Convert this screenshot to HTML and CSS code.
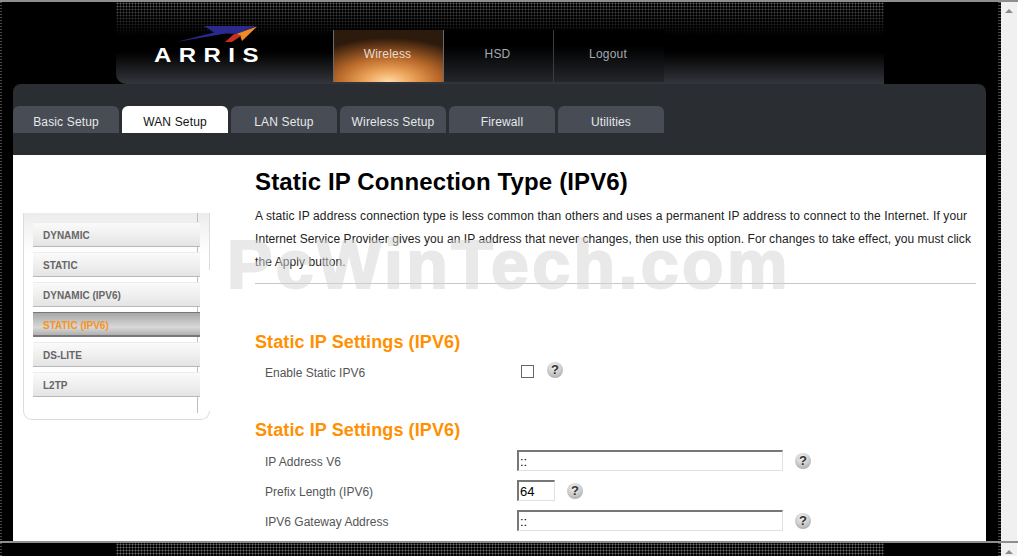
FILE: index.html
```html
<!DOCTYPE html>
<html lang="en">
<head>
    <meta charset="UTF-8">
    <meta name="viewport" content="width=device-width, initial-scale=1.0">
    <title>Static IP Connection Type (IPV6)</title>
    <link rel="stylesheet" href="styles.css">
</head>
<body>

<div class="window">
    <div class="page">
        <header class="header">
            <div class="logo">
                <svg class="logo-mark" width="90" height="20" viewBox="0 0 90 20">
                    <polygon points="0,18 38,8.5 28,2 80,2 62,10 50,9.5" fill="#2a2a8c"/>
                    <polygon points="81,2.5 66,17 64,11 59,10.5" fill="#f08a24"/>
                    <polygon points="58,10 64,11 65,12 56,18 49,18" fill="#c9301f"/>
                </svg>
                <span class="logo-text">ARRIS</span>
            </div>
            <nav class="top-nav">
                <a class="top-link active" href="#">Wireless</a>
                <a class="top-link" href="#">HSD</a>
                <a class="top-link" href="#">Logout</a>
            </nav>
        </header>

        <div class="main">
            <div class="tab-bar">
                <a class="tab" href="#">Basic Setup</a>
                <a class="tab active" href="#">WAN Setup</a>
                <a class="tab" href="#">LAN Setup</a>
                <a class="tab" href="#">Wireless Setup</a>
                <a class="tab" href="#">Firewall</a>
                <a class="tab" href="#">Utilities</a>
            </div>

            <div class="body-area">
                <div class="side-col">
                    <ul class="side-nav">
                        <li><a href="#">DYNAMIC</a></li>
                        <li><a href="#">STATIC</a></li>
                        <li><a href="#">DYNAMIC (IPV6)</a></li>
                        <li><a class="active" href="#">STATIC (IPV6)</a></li>
                        <li><a href="#">DS-LITE</a></li>
                        <li><a href="#">L2TP</a></li>
                    </ul>
                </div>

                <div class="content">
                    <h1>Static IP Connection Type (IPV6)</h1>
                    <p class="intro">A static IP address connection type is less common than others and uses a permanent IP address to connect to the Internet. If your<br>
                    Internet Service Provider gives you an IP address that never changes, then use this option. For changes to take effect, you must click<br>
                    the Apply button.</p>
                    <hr class="rule">

                    <h2 class="first">Static IP Settings (IPV6)</h2>
                    <div class="form-row">
                        <label for="enable">Enable Static IPV6</label>
                        <div class="control check-control">
                            <input type="checkbox" id="enable">
                            <span class="help">?</span>
                        </div>
                    </div>

                    <h2>Static IP Settings (IPV6)</h2>
                    <div class="form-row">
                        <label for="addr">IP Address V6</label>
                        <div class="control">
                            <input class="text-input" type="text" id="addr" value="::">
                            <span class="help">?</span>
                        </div>
                    </div>
                    <div class="form-row">
                        <label for="prefix">Prefix Length (IPV6)</label>
                        <div class="control">
                            <input class="text-input short" type="text" id="prefix" value="64">
                            <span class="help">?</span>
                        </div>
                    </div>
                    <div class="form-row">
                        <label for="gateway">IPV6 Gateway Address</label>
                        <div class="control">
                            <input class="text-input" type="text" id="gateway" value="::">
                            <span class="help">?</span>
                        </div>
                    </div>
                </div>

                <div class="watermark">PcWinTech.com</div>
            </div>
        </div>
    </div>
    <div class="scrollbar"><span class="arrow-up"></span></div>
</div>

<div class="window next">
    <div class="page">
        <div class="header-stub"></div>
    </div>
    <div class="scrollbar"><span class="arrow-up"></span></div>
</div>

</body>
</html>
```

FILE: styles.css
```css
html, body {
    height: 100%;
}

body {
    margin: 0;
    height: 556px;
    overflow: hidden;
    background-color: #000;
    font-family: "Liberation Sans", Arial, sans-serif;
    font-size: 12px;
}

a {
    text-decoration: none;
}

.window {
    display: flex;
    height: 539px;
    border-top: 2px solid #8e8e8e;
}

.window.next {
    height: 13px;
}

.page {
    flex: 1;
    min-width: 0;
    overflow: hidden;
    background:
        repeating-linear-gradient(#4a4a4a 0 1px, #000 1px 3px) left top / 2px 100% no-repeat,
        repeating-linear-gradient(#4a4a4a 0 1px, #000 1px 3px) right top / 3px 100% no-repeat,
        #000;
}

.scrollbar {
    width: 17px;
    flex: none;
    display: flex;
    justify-content: center;
    padding-top: 7px;
    box-sizing: border-box;
    background-color: #f0f0f0;
    border-right: 1px solid #fff;
}

.arrow-up {
    width: 0;
    height: 0;
    border-left: 4px solid transparent;
    border-right: 4px solid transparent;
    border-bottom: 4px solid #8a8a8a;
}

/* header */
.header {
    display: flex;
    width: 768px;
    height: 82px;
    margin-left: 116px;
    border-bottom-left-radius: 10px;
    background:
        linear-gradient(rgba(0, 0, 0, 0.1) 0, #000 34px, #000 50px, #33363c 82px),
        radial-gradient(circle, #6a6a6a 0.9px, transparent 1.1px) 0 0 / 3px 3px,
        #000;
}

.header-stub {
    width: 768px;
    height: 13px;
    margin-left: 116px;
    background: radial-gradient(circle, #6a6a6a 0.9px, transparent 1.1px) 0 0 / 3px 3px;
}

.logo {
    width: 217px;
    padding: 22px 0 0 38px;
    box-sizing: border-box;
}

.logo-mark {
    display: block;
    margin-left: 22px;
}

.logo-text {
    display: block;
    margin-top: 3px;
    color: #fff;
    font-size: 20px;
    line-height: 17px;
    font-weight: bold;
    letter-spacing: 6.2px;
    transform: scaleX(1.2);
    transform-origin: left center;
}

.top-nav {
    display: flex;
    align-items: flex-end;
}

.top-link {
    display: flex;
    align-items: center;
    justify-content: center;
    width: 110px;
    height: 52px;
    margin-bottom: 2px;
    box-sizing: border-box;
    padding: 0 2px 4px 0;
    color: #a3aab0;
    letter-spacing: 0.2px;
    background: linear-gradient(#000 30%, #24262a);
    border-right: 1px solid #3a3c40;
}

.top-link:last-child {
    border-right: none;
}

.top-link.active {
    width: 111px;
    color: #e6ddd2;
    background:
        radial-gradient(ellipse 85% 85% at 50% 100%, #fddcaa 0, #eea55c 25%, #b9692a 55%, #6b3c18 80%, #2c1a0c 100%);
    border-left: 1px solid #6a6a6a;
    border-right: 1px solid #6a6a6a;
}

/* main block */
.main {
    width: 973px;
    margin-left: 13px;
}

.tab-bar {
    display: flex;
    gap: 3px;
    height: 71px;
    padding-top: 22px;
    box-sizing: border-box;
    border-radius: 8px 8px 0 0;
    background-color: #2a2d32;
}

.tab {
    width: 106px;
    height: 27px;
    line-height: 32px;
    text-align: center;
    color: #e6e8ea;
    letter-spacing: 0.15px;
    border-radius: 6px 6px 0 0;
    background-color: #484c55;
}

.tab.active {
    color: #111;
    background-color: #fff;
}

.body-area {
    position: relative;
    display: flex;
    height: 386px;
    overflow: hidden;
    background-color: #fff;
}

.side-col {
    width: 242px;
    flex: none;
    padding: 58px 0 0 10px;
    box-sizing: border-box;
}

.side-nav {
    position: relative;
    width: 187px;
    height: 207px;
    margin: 0;
    padding: 9px 0 0 9px;
    box-sizing: border-box;
    list-style-type: none;
    border: 1px solid #dcdcdc;
    border-top: none;
    border-radius: 0 0 9px 9px;
    background: linear-gradient(#ececec, #fff 40px);
}

/* inner vertical line */
.side-nav::before {
    content: "";
    position: absolute;
    left: 173px;
    top: 0;
    bottom: 6px;
    width: 1px;
    background-color: #bdbdbd;
}

/* the outer right edge stops part way down */
.side-nav::after {
    content: "";
    position: absolute;
    right: -1px;
    top: 57px;
    bottom: 8px;
    width: 1px;
    background-color: #fff;
}

.side-nav li {
    position: relative;
    z-index: 1;
    margin-bottom: 5px;
}

.side-nav a {
    display: block;
    width: 167px;
    height: 25px;
    padding-left: 10px;
    box-sizing: border-box;
    color: #666;
    font-size: 10px;
    font-weight: bold;
    line-height: 25px;
    border-top: 1px solid #ededed;
    border-bottom: 1px solid #b8b8b8;
    background: linear-gradient(#fafafa, #f2f2f2 40%, #e4e4e4);
}

.side-nav a.active {
    color: #f7941d;
    border-top: 1px solid #777;
    border-bottom: 2px solid #777;
    background: linear-gradient(#a8a8a8, #d8d8d8 65%, #b0b0b0);
}

.content {
    width: 721px;
    padding-top: 13px;
}

h1 {
    margin: 0;
    color: #000;
    font-size: 24px;
    line-height: 28px;
    letter-spacing: 0.14px;
}

.intro {
    margin: 8px 0 0;
    color: #222;
    line-height: 23px;
    letter-spacing: 0.07px;
    white-space: nowrap;
    position: relative;
    top: 1px;
}

.intro::first-line {
    letter-spacing: 0.13px;
}

.rule {
    height: 1px;
    margin: 10px 0 0;
    border: none;
    background-color: #c8c8c8;
}

h2 {
    margin: 32px 0 5px;
    color: #ff9000;
    font-size: 18px;
    line-height: 22px;
    letter-spacing: 0.1px;
}

h2.first {
    margin: 47px 0 4px;
}

.form-row {
    display: grid;
    grid-template-columns: 252px auto;
    align-items: start;
    height: 30px;
    padding-left: 10px;
    color: #555;
    line-height: 32px;
}

.control {
    display: flex;
    align-items: flex-start;
    gap: 12px;
    padding-top: 4px;
}

.check-control {
    margin-left: 4px;
    gap: 13px;
    padding-top: 5px;
}

.check-control input {
    margin-top: 3px;
}

.check-control .help {
    margin-top: 0;
}

input[type="checkbox"] {
    appearance: none;
    width: 13px;
    height: 13px;
    margin: 3px 0 0;
    border: 1px solid #666;
    background-color: #fff;
}

.text-input {
    width: 266px;
    height: 21px;
    padding: 1px 0 0 1px;
    box-sizing: border-box;
    color: #000;
    font-family: "Liberation Sans", Arial, sans-serif;
    font-size: 13px;
    border-width: 2px 1px 1px 2px;
    border-style: solid;
    border-color: #777 #e0e0e0 #e0e0e0 #777;
    background-color: #fff;
}

.text-input.short {
    width: 38px;
}

.help {
    display: inline-block;
    width: 16px;
    height: 16px;
    flex: none;
    margin-top: 3px;
    color: #333;
    font-size: 13px;
    font-weight: bold;
    line-height: 16px;
    text-align: center;
    border-radius: 50%;
    background: radial-gradient(circle at 45% 30%, #f2f2f2, #c8c8c8 55%, #959595);
}

.watermark {
    position: absolute;
    left: 214px;
    top: 70px;
    color: #d4d4d4;
    font-size: 68px;
    font-weight: bold;
    letter-spacing: 3.4px;
    line-height: 78px;
    white-space: nowrap;
    pointer-events: none;
    opacity: 0.5;
    -webkit-text-stroke: 2px #d4d4d4;
}
```
